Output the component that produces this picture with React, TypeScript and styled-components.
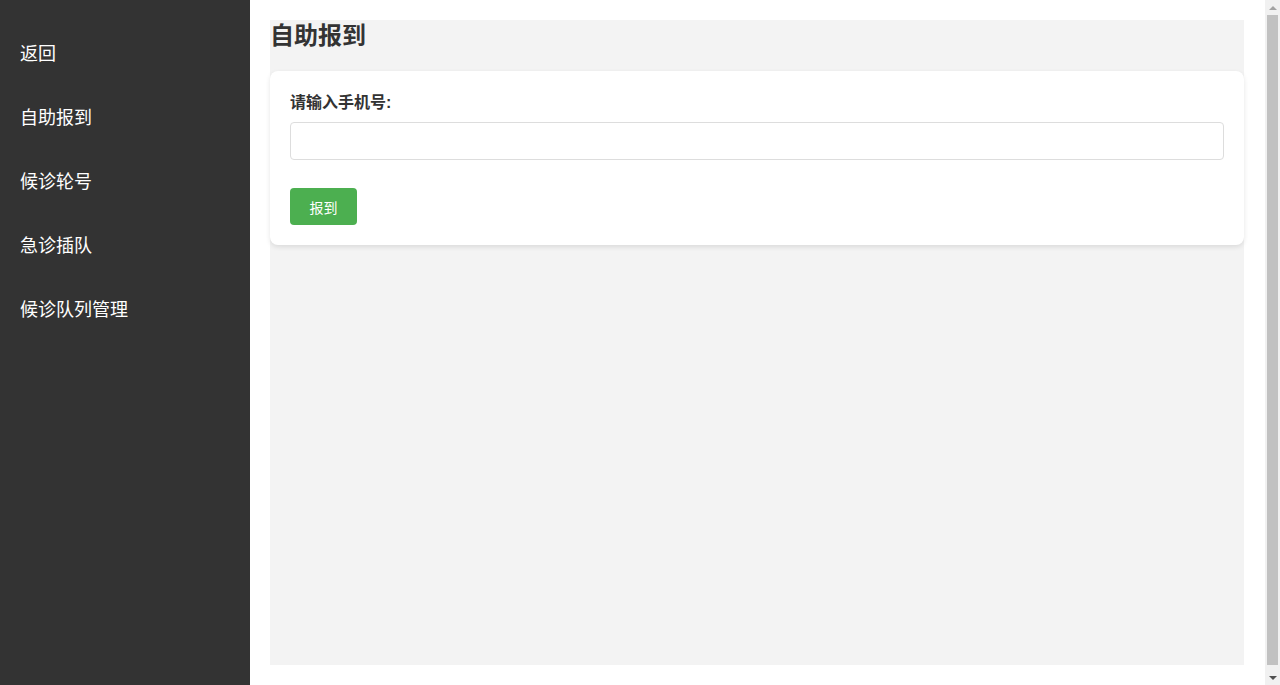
import styled, { createGlobalStyle } from "styled-components";

const GlobalStyle = createGlobalStyle`
    * {
        box-sizing: border-box;
    }
    body {
        margin: 0;
        font-family: "Liberation Sans", "Noto Sans CJK SC", sans-serif;
        color: #333;
        background: #fff;
    }
`;

const menus = ["返回", "自助报到", "候诊轮号", "急诊插队", "候诊队列管理"];

const App = () => {
    return (
        <>
            <GlobalStyle />
            <Layout>
                <Sidebar>
                    {menus.map((m) => (
                        <MenuItem key={m}>{m}</MenuItem>
                    ))}
                </Sidebar>
                <Main>
                    <Content>
                        <Title>自助报到</Title>
                        <Card>
                            <Label>请输入手机号:</Label>
                            <Input type="text" />
                            <SubmitButton>报到</SubmitButton>
                        </Card>
                    </Content>
                </Main>
            </Layout>
            {/* page scrollbar as seen in the screenshot */}
            <ScrollTrack>
                <Arrow $up />
                <Thumb />
                <Arrow />
            </ScrollTrack>
        </>
    );
};

const Layout = styled.div`
    display: flex;
    width: 100%;
`;

const Sidebar = styled.nav`
    flex: 0 0 250px;
    width: 250px;
    min-height: 100vh;
    padding: 22px 0 20px;
    background: #333;
`;

const MenuItem = styled.div`
    padding: 20px;
    font-size: 18px;
    line-height: 24px;
    color: #fff;
    cursor: pointer;
`;

const Main = styled.main`
    flex: 1;
    padding: 20px 36px 0 20px;
`;

const Content = styled.div`
    height: calc(100vh - 40px);
    background: #f3f3f3;
`;

const Title = styled.h2`
    margin: 0 0 19px;
    font-size: 24px;
    line-height: 32px;
    font-weight: bold;
    color: #333;
`;

const Card = styled.div`
    display: flex;
    flex-direction: column;
    align-items: flex-start;
    padding: 20px;
    background: #fff;
    border-radius: 8px;
    box-shadow: 0 2px 5px rgba(0, 0, 0, 0.1);
`;

const Label = styled.label`
    font-size: 16px;
    line-height: 21px;
    padding-top: 1px;
    font-weight: bold;
    color: #333;
    margin-bottom: 9px;
`;

const Input = styled.input`
    width: 100%;
    height: 38px;
    padding: 8px;
    border: 1px solid #ddd;
    border-radius: 4px;
    font-size: 16px;
    outline: none;
    margin-bottom: 28px;
`;

const SubmitButton = styled.button`
    width: 67px;
    height: 37px;
    border: none;
    border-radius: 4px;
    background: #4caf50;
    color: #fff;
    font-family: inherit;
    font-size: 14px;
    cursor: pointer;
`;

const ScrollTrack = styled.div`
    position: fixed;
    top: 0;
    right: 0;
    bottom: 0;
    width: 15px;
    display: flex;
    flex-direction: column;
    align-items: center;
    background: #f1f1f1;
`;

const Arrow = styled.div<{ $up?: boolean }>`
    flex: 0 0 15px;
    width: 15px;
    display: flex;
    align-items: center;
    justify-content: center;

    &::before {
        content: "";
        width: 0;
        height: 0;
        border-left: 4px solid transparent;
        border-right: 4px solid transparent;
        ${(p) =>
            p.$up
                ? "border-bottom: 4px solid #a3a3a3;"
                : "border-top: 4px solid #505050;"}
    }
`;

const Thumb = styled.div`
    flex: 1;
    width: 11px;
    margin-bottom: 5px;
    background: #c1c1c1;
`;

export default App;
